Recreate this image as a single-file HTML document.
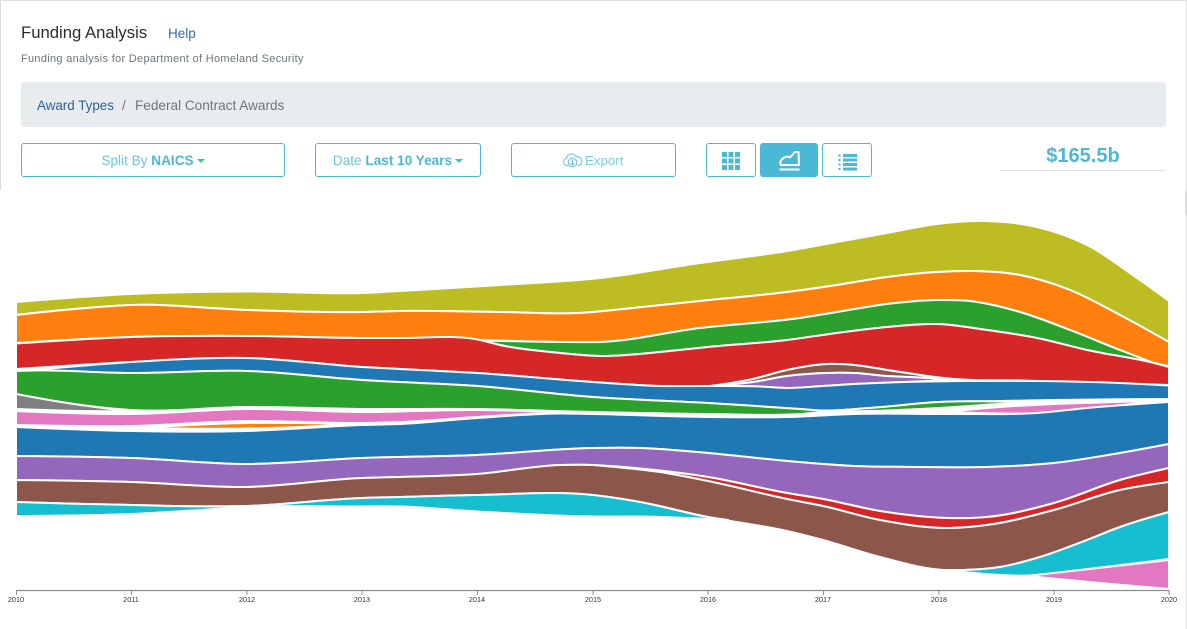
<!DOCTYPE html>
<html><head><meta charset="utf-8"><title>Funding Analysis</title>
<style>
html,body{margin:0;padding:0;background:#fff;width:1187px;height:629px;overflow:hidden}
body{position:relative;font-family:"Liberation Sans",sans-serif}
.a{position:absolute;white-space:nowrap}
.btn{position:absolute;top:143px;height:32px;border:1px solid #4bb9d5;border-radius:3px;background:#fff;color:#6cc6de;font-size:13.6px;line-height:34px;text-align:center;white-space:nowrap}
.btn b{color:#4bb9d5}
.caret{display:inline-block;width:0;height:0;border-left:4px solid transparent;border-right:4px solid transparent;border-top:4px solid #4bb9d5;vertical-align:2px;margin-left:3px}
svg{position:absolute;left:0;top:0}
</style></head><body>
<div class="a" style="left:0;top:0;width:1186px;height:1px;background:#ddd"></div>
<div class="a" style="left:0;top:0;width:1px;height:190px;background:#ddd"></div>
<div class="a" style="left:1186px;top:0;width:1px;height:629px;background:#e2e2e2"></div>
<div class="a" style="left:1185px;top:191px;width:2px;height:24px;background:#ddd"></div>

<div class="a" style="left:21px;top:23px;font-size:16.7px;line-height:20px;color:#2b2b33">Funding Analysis</div>
<div class="a" style="left:168px;top:26px;font-size:13.5px;line-height:16px;color:#2f6fa8">Help</div>
<div class="a" style="left:21px;top:52px;font-size:11px;line-height:14px;letter-spacing:.3px;color:#6c757d">Funding analysis for Department of Homeland Security</div>

<div class="a" style="left:21px;top:82px;width:1145px;height:45px;background:#e9ecef;border-radius:3px"></div>
<div class="a" style="left:37px;top:98px;font-size:13.4px;line-height:16px;color:#2f5f98">Award Types</div>
<div class="a" style="left:122px;top:98px;font-size:13.4px;line-height:16px;color:#6c757d">/</div>
<div class="a" style="left:135px;top:98px;font-size:13.6px;line-height:16px;color:#6c757d">Federal Contract Awards</div>

<div class="btn" style="left:21px;width:262px">Split By <b>NAICS</b><span class="caret"></span></div>
<div class="btn" style="left:315px;width:164px">Date <b>Last 10 Years</b><span class="caret"></span></div>
<div class="btn" style="left:511px;width:163px"></div>
<div class="a" style="left:585px;top:153px;font-size:13.300px;line-height:16px;color:#7ccde2">Export</div>
<div class="btn" style="left:706px;width:48px"></div>
<div class="btn" style="left:760px;width:56px;background:#4bb9d5"></div>
<div class="btn" style="left:822px;width:48px"></div>

<svg width="1187" height="629" viewBox="0 0 1187 629" style="pointer-events:none">
  <!-- export cloud -->
  <g fill="none" stroke="#6cc6de" stroke-width="1.1">
    <path d="M568.500 165.500h-1.500a3.600 3.600 0 0 1-.6-7.100a5 5 0 0 1 9.600-1.500a4.200 4.200 0 0 1 2.800 8.600h-1.300"/>
    <circle cx="572.500" cy="162.500" r="4.300"/>
    <path d="M572.500 159.500v5.500M570.500 163.200l2 2l2-2"/>
  </g>
  <!-- grid icon -->
  <g fill="#4bb9d5">
    <rect x="722" y="152" width="5" height="5"/><rect x="728.500" y="152" width="5" height="5"/><rect x="735" y="152" width="5" height="5"/>
    <rect x="722" y="158.500" width="5" height="5"/><rect x="728.500" y="158.500" width="5" height="5"/><rect x="735" y="158.500" width="5" height="5"/>
    <rect x="722" y="165" width="5" height="5"/><rect x="728.500" y="165" width="5" height="5"/><rect x="735" y="165" width="5" height="5"/>
  </g>
  <!-- area chart icon -->
  <g fill="none" stroke="#fff" stroke-width="2" stroke-linejoin="round">
    <path d="M780.500 165v-4c3-4 6-5.500 9.500-3.500l5-5.500h3.500l.5 13z"/>
    <path d="M779.500 169.500h20"/>
  </g>
  <!-- list icon -->
  <g fill="#4bb9d5">
    <rect x="843" y="154" width="14" height="3"/><rect x="843" y="158.500" width="14" height="3"/><rect x="843" y="163" width="14" height="3"/><rect x="843" y="167.500" width="14" height="3"/>
    <rect x="838.500" y="154.500" width="2" height="2"/><rect x="838.500" y="159" width="2" height="2"/><rect x="838.500" y="163.500" width="2" height="2"/><rect x="838.500" y="168" width="2" height="2"/>
  </g>
  <text x="1083" y="162" text-anchor="middle" font-family="Liberation Sans, sans-serif" font-weight="700" font-size="20" fill="#4bb9d5">$165.5b</text>
  <rect x="1000" y="170" width="166" height="1" fill="#dfe0ea"/>

  <g id="stream" stroke="#fff" stroke-width="2" stroke-linejoin="round"></g>

  <g stroke="#8a8f90" fill="none">
    <path d="M16 590.500H1169" stroke-width="1.200"/>
    <path d="M16.500 590v5M131.500 590v5M247 590v5M362 590v5M477.500 590v5M593 590v5M708 590v5M823.500 590v5M939 590v5M1054 590v5M1169 590v5" stroke-width="1"/>
  </g>
  <g font-family="Liberation Sans, sans-serif" font-size="7.300" fill="#333" text-anchor="middle">
    <text x="16" y="602">2010</text><text x="131" y="602">2011</text><text x="247" y="602">2012</text><text x="362" y="602">2013</text><text x="477" y="602">2014</text><text x="593" y="602">2015</text><text x="708" y="602">2016</text><text x="823" y="602">2017</text><text x="939" y="602">2018</text><text x="1054" y="602">2019</text><text x="1169" y="602">2020</text>
  </g>
</svg>

<script>
(function(){
function seg(p){
  var n=p.length,i,h=[],s=[],t=[],d='';
  for(i=0;i<n-1;i++){h[i]=p[i+1][0]-p[i][0];s[i]=(p[i+1][1]-p[i][1])/h[i];}
  for(i=1;i<n-1;i++){
    t[i]=(s[i-1]*h[i]+s[i]*h[i-1])/(h[i-1]+h[i]);
  }
  t[0]=n>2?(3*s[0]-t[1])/2:s[0];
  t[n-1]=n>2?(3*s[n-2]-t[n-2])/2:s[n-2];
  for(i=0;i<n-1;i++){
    var c=h[i]/3;
    d+='C'+(p[i][0]+c).toFixed(1)+' '+(p[i][1]+c*t[i]).toFixed(1)+' '+(p[i+1][0]-c).toFixed(1)+' '+(p[i+1][1]-c*t[i+1]).toFixed(1)+' '+p[i+1][0]+' '+p[i+1][1];
  }
  return d;
}
function band(color,top,bot){
  var r=bot.slice().reverse();
  return '<path fill="'+color+'" d="M'+top[0][0]+' '+top[0][1]+seg(top)+'L'+r[0][0]+' '+r[0][1]+seg(r)+'Z"/>';
}
var A=[[16,302],[131,294],[247,291.5],[362,293],[400,291],[500,285],[600,278],[700,263],[787,251],[837,242],[887,233],[937,224],[987,221],[1037,227],[1087,245],[1137,278],[1169,301]];
var B=[[16,315],[75,309],[131,305],[247,310],[362,312],[400,311],[500,312],[580,313],[633,308],[700,301],[787,292],[837,285],[887,277],[937,272],[970,271],[1020,275],[1070,290],[1120,315],[1169,342]];
var Cr=[[567,342],[600,342],[700,328],[800,318],[837,312],[887,304],[937,300],[970,301],[1020,312],[1070,330],[1120,350],[1154,363]];
var C=[[16,343],[131,337],[247,336],[362,338],[400,338],[480,340]].concat(Cr).concat([[1169,366]]);
var Dr=[[500,345],[560,353],[600,356],[660,352],[708,347],[787,340],[837,333],[887,327],[937,324],[987,330],[1037,338],[1087,350],[1154,363]];
var D=[[16,343.5],[131,337],[247,336],[362,338],[400,338],[480,340]].concat(Dr).concat([[1169,367]]);
var brownT=[[710,386],[753,379],[787,370],[827,364],[854,365],[887,370],[920,375],[950,380]];
var brownB=[[710,386],[753,382],[787,376],[827,373],[854,373],[887,376],[920,377.5],[950,380]];
var purpB=[[710,386],[760,386.5],[787,388],[823,386],[854,384],[904,382],[950,380]];
var Ehead=[[33,368],[131,362],[247,358],[362,367],[400,369],[477,373],[593,382],[660,386],[710,386]];
var E=[[16,369]].concat(Ehead).concat([[753,379],[787,370],[827,364],[854,365],[887,370],[920,375],[954,379],[1020,380.5],[1087,382.5],[1169,385]]);
var blueT=[[33,370],[131,362],[247,358],[362,367],[400,369],[477,373],[593,382],[660,386],[710,386],[760,386.5],[787,388],[823,386],[854,384],[904,382],[964,381],[1037,381],[1120,383],[1169,385.5]];
var H=[[33,370.5],[131,373],[247,371],[362,380],[477,386],[593,397],[708,403],[800,409],[823,410.5],[870,408],[939,402],[1000,401],[1054,400],[1169,399]];
var greenT=[[16,371],[33,370.5],[131,373],[247,371],[362,380],[477,386],[593,397],[708,403],[800,409],[823,410.5],[870,408],[939,402],[1000,401.5],[1033,402.5]];
var I=[[16,394],[67,403],[131,410],[247,407],[362,409],[477,409],[593,412],[708,414],[800,414],[823,412],[870,411],[939,408],[1000,404],[1033,402.5]];
var J=[[16,456],[131,458],[247,464],[362,458],[477,455],[593,448],[640,448],[708,453],[787,461],[854,466],[920,467],[987,467],[1054,463],[1120,453],[1169,444]];
var BT=[[16,427],[131,431],[247,431],[362,425],[400,424],[477,418],[560,413.5],[593,414],[708,417],[787,417],[854,414],[954,414],[1037,413],[1087,408],[1169,402]];
var Kr=[[610,466],[708,477],[787,493],[823,499],[880,511],[947,518],[987,517],[1054,503],[1120,480],[1169,468]];
var K=[[16,480],[131,482],[247,487],[362,478],[400,477],[477,474],[560,465],[593,465]].concat(Kr);
var L=[[610,466.5],[660,472],[708,481],[787,499],[823,506],[880,520],[947,528],[987,525],[1054,510],[1120,490],[1169,482]];
var brT=[[16,480],[131,482],[247,487],[362,478],[400,477],[477,474],[560,465],[593,465]].concat(L);
var Mr=[[944,570],[964,570],[1000,567],[1040,557],[1087,540],[1120,527],[1169,512]];
var M=[[16,502],[131,505],[247,506],[362,498],[400,497],[477,495],[593,495],[640,502],[708,517],[787,531],[823,540],[880,557]].concat(Mr);
var h='';
h+=band('#bcbd22',A,B);
h+=band('#ff7f0e',B,C);
h+=band('#2ca02c',[[480,340.5]].concat(Cr),[[480,340.5]].concat(Dr));
h+=band('#d62728',D,E);
h+=band('#8c564b',brownT,brownB);
h+=band('#9467bd',brownB,purpB);
h+=band('#1f77b4',blueT,H);
h+=band('#2ca02c',greenT,I);
h+=band('#7f7f7f',[[16,394],[67,403],[131,411.5]],[[16,409],[80,411],[131,411.5]]);
h+=band('#e377c2',[[16,411],[131,414],[247,409],[362,412],[477,410],[560,412]],[[16,425],[131,426],[247,421],[362,423],[400,422],[477,417],[560,412]]);
h+=band('#ff7f0e',[[137,428],[247,423],[300,423],[350,424]],[[137,428],[247,428.5],[300,427],[350,424]]);
h+=band('#e377c2',[[950,411.5],[1000,407],[1054,404],[1100,402.5],[1145,401]],[[950,412],[1000,413.5],[1054,413],[1100,408],[1145,402]]);
h+=band('#1f77b4',BT,J);
h+=band('#9467bd',J,K);
h+=band('#d62728',Kr,L);
h+=band('#8c564b',brT,M);
h+=band('#17becf',[[16,502],[131,505],[247,506],[362,498],[400,497],[477,495],[593,495],[640,502],[708,517],[728,520]],[[16,516],[131,514],[200,510],[250,507],[362,506.5],[400,506.5],[477,511.5],[593,516.5],[650,516.7],[728,520]]);
h+=band('#17becf',Mr,[[944,570],[1000,575],[1030,575.5],[1054,573],[1169,559]]);
h+=band('#e377c2',[[1027,576],[1054,573],[1169,560]],[[1027,576],[1100,583],[1169,589]]);
document.getElementById('stream').innerHTML=h;
})();
</script>
</body></html>
